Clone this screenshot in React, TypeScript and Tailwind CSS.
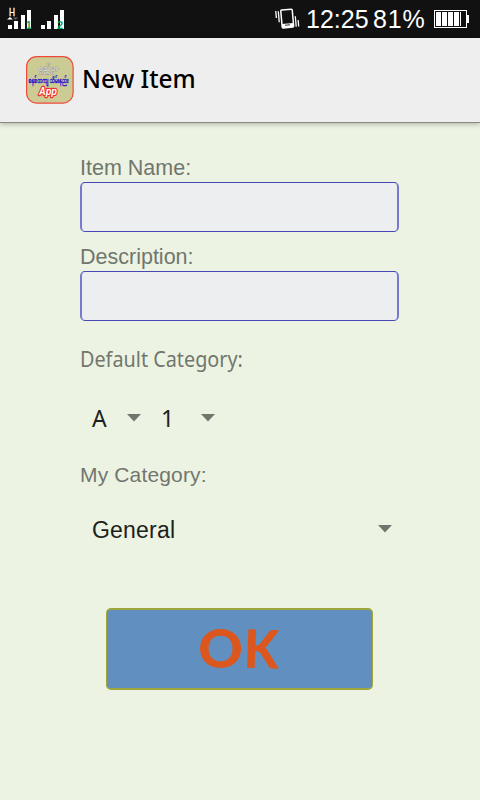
import React from 'react';

function SignalBars({ slot }: { slot: 1 | 2 }) {
  return (
    <svg width="26" height="24" viewBox="0 0 26 24" className="block overflow-visible">
      <g fill="#fff">
        <rect x="1" y="17" width="4" height="4" />
        <rect x="7" y="13" width="4" height="8" />
        <rect x="14" y="7" width="4" height="14" />
        <rect x="20" y="2" width="4" height="19" />
      </g>
      {slot === 1 && (
        <>
          <path d="M0 11h12v2H0z" fill="#111" />
          <path d="M0 11.5L3 9l3 2.5z" fill="#fff" />
          <path d="M6 9.5h5L8.500 12z" fill="#666" />
          <text x="2" y="8" fontSize="10.5" fill="#fff" stroke="#fff" strokeWidth="0.3" textLength="6" lengthAdjust="spacingAndGlyphs" fontFamily="Liberation Sans, sans-serif">H</text>
        </>
      )}
      <text
        x={slot === 1 ? 19 : 17}
        y="21"
        fontSize={slot === 1 ? 10 : 11}
        fontWeight="700"
        fill="#0ba552"
        fontFamily="Liberation Sans, sans-serif"
      >
        {slot}
      </text>
    </svg>
  );
}

function VibrateIcon() {
  return (
    <svg width="25" height="22" viewBox="0 0 25 22" className="block">
      <g transform="rotate(-5 12.5 11)" fill="none" stroke="#fff">
        <rect x="6.500" y="1.500" width="11.500" height="18" rx="1" strokeWidth="1.500" />
        <path d="M6.500 17.500h11.500" strokeWidth="4" />
        <path d="M9.500 17h5" stroke="#333" strokeWidth="1" />
        <path d="M4 2.500v11M1.500 2v7M20.500 9v10.500M23 13v6.500" strokeWidth="1.300" />
      </g>
    </svg>
  );
}

function BatteryIcon() {
  return (
    <svg width="36" height="19" viewBox="0 0 36 19" className="block">
      <rect x="0.500" y="0.500" width="32" height="17" fill="none" stroke="#fff" />
      <path d="M33 5h2v8h-2z" fill="#fff" />
      <path d="M2 2h5v14H2zM8 2h5v14H8zM14 2h5v14h-5zM20 2h5v14h-5zM26 2h1v14h-1z" fill="#fff" />
    </svg>
  );
}

function StatusBar() {
  return (
    <div className="flex h-[38px] items-start bg-[#111] text-white">
      <div className="flex gap-[7px] pt-2 pl-[7px]">
        <SignalBars slot={1} />
        <SignalBars slot={2} />
      </div>
      <div className="ml-auto flex items-start pr-[10px] font-['Liberation_Sans',sans-serif] text-[25px] leading-[38px]">
        <div className="mr-[6px] pt-2">
          <VibrateIcon />
        </div>
        <span className="w-[67px] whitespace-nowrap">12:25</span>
        <span className="w-[61px] whitespace-nowrap tracking-[0.8px]">81%</span>
        <div className="pt-[10px]">
          <BatteryIcon />
        </div>
      </div>
    </div>
  );
}

function AppLogo() {
  return (
    <svg width="48" height="48" viewBox="0 0 48 48" className="block shrink-0">
      <rect x="0.600" y="0.600" width="46.500" height="46.500" rx="10" fill="#cccb94" stroke="#ef4a3a" strokeWidth="1.200" />
      <g textAnchor="middle" fontFamily="Noto Sans Myanmar, Padauk, Noto Sans, sans-serif">
        <text x="22.500" y="15" fontSize="7" fill="#eee" stroke="#888" strokeWidth="0.800" paintOrder="stroke" textLength="20" lengthAdjust="spacingAndGlyphs">
          ရှည်မှာ
        </text>
        <text x="22.500" y="27" fontSize="7" fill="#2716cc" stroke="#2716cc" strokeWidth="0.400" textLength="40" lengthAdjust="spacingAndGlyphs">
          စနစ်တကျ သိမ်းနည်း
        </text>
      </g>
      <text
        x="13"
        y="39"
        fontSize="10"
        fontWeight="700"
        fontStyle="italic"
        fill="#fff"
        stroke="#f02c2c"
        strokeWidth="2.400"
        paintOrder="stroke"
        strokeLinejoin="round"
        textLength="18"
        lengthAdjust="spacingAndGlyphs"
        fontFamily="Liberation Sans, sans-serif"
      >
        App
      </text>
    </svg>
  );
}

function Caret() {
  return (
    <svg width="14" height="8" viewBox="0 0 14 8" className="block shrink-0">
      <path d="M0 0h14L7 7.500z" fill="#70756d" />
    </svg>
  );
}

function TextField({ label, id }: { label: string; id: string }) {
  return (
    <div>
      <label
        htmlFor={id}
        className="block h-[27px] font-['Liberation_Sans',sans-serif] text-[21.5px] leading-[26px] text-[#71766e]"
      >
        {label}
      </label>
      <input
        id={id}
        type="text"
        className="block h-[50px] w-[319px] rounded-[5px] border-x-2 border-y border-x-[#7679ce] border-y-[#4547b4] bg-[#edeef0] px-3 text-xl outline-none"
      />
    </div>
  );
}

export default function App() {
  return (
    <div className="flex h-[800px] w-[480px] flex-col overflow-hidden bg-[#ecf3e2]">
      <StatusBar />

      <header className="flex h-[85px] items-center border-b border-[#858a83] bg-[#eee] pl-[26px] shadow-[0_1px_5px_rgba(0,0,0,0.28)]">
        <AppLogo />
        <h1 className="mb-1 ml-2 origin-left scale-x-[0.94] font-['Noto_Sans',sans-serif] text-[26px] leading-9 font-medium whitespace-nowrap text-black">
          New Item
        </h1>
      </header>

      <main className="flex flex-col pt-8 pl-20">
        <div className="flex flex-col gap-3">
          <TextField id="item-name" label="Item Name:" />
          <TextField id="description" label="Description:" />
        </div>

        <div className="mt-[23px] origin-left scale-x-[0.943] self-start font-['Noto_Sans',sans-serif] text-[21px] leading-[30px] text-[#71766e]">
          Default Category:
        </div>
        <div className="mt-[29px] flex h-[30px] items-center pl-3 font-['Noto_Sans',sans-serif] text-[23px] leading-[30px] text-[#1d211b]">
          <span className="w-[35px]">A</span>
          <Caret />
          <span className="ml-5 w-10">1</span>
          <Caret />
        </div>

        <div className="mt-[27px] font-['Liberation_Sans',sans-serif] text-[21px] leading-[30px] tracking-[0.15px] text-[#71766e]">
          My Category:
        </div>
        <div className="mt-6 flex h-[30px] w-[312px] items-center justify-between pl-3 font-['Liberation_Sans',sans-serif] text-[23px] leading-[30px] tracking-[0.2px] text-[#1d211b]">
          <span className="pt-0.5">General</span>
          <Caret />
        </div>

        <button
          type="button"
          className="mt-16 ml-[26px] flex h-[82px] w-[267px] items-center justify-center rounded-[5px] border-x border-y-2 border-[#a0a63c] bg-[#608fc0] pb-1 font-['Lato',sans-serif] text-[53px] leading-none font-black text-[#db571d]"
        >
          <span className="scale-x-[1.04]">O</span>
          <span className="ml-px scale-x-[0.95] rotate-2">K</span>
        </button>
      </main>
    </div>
  );
}
